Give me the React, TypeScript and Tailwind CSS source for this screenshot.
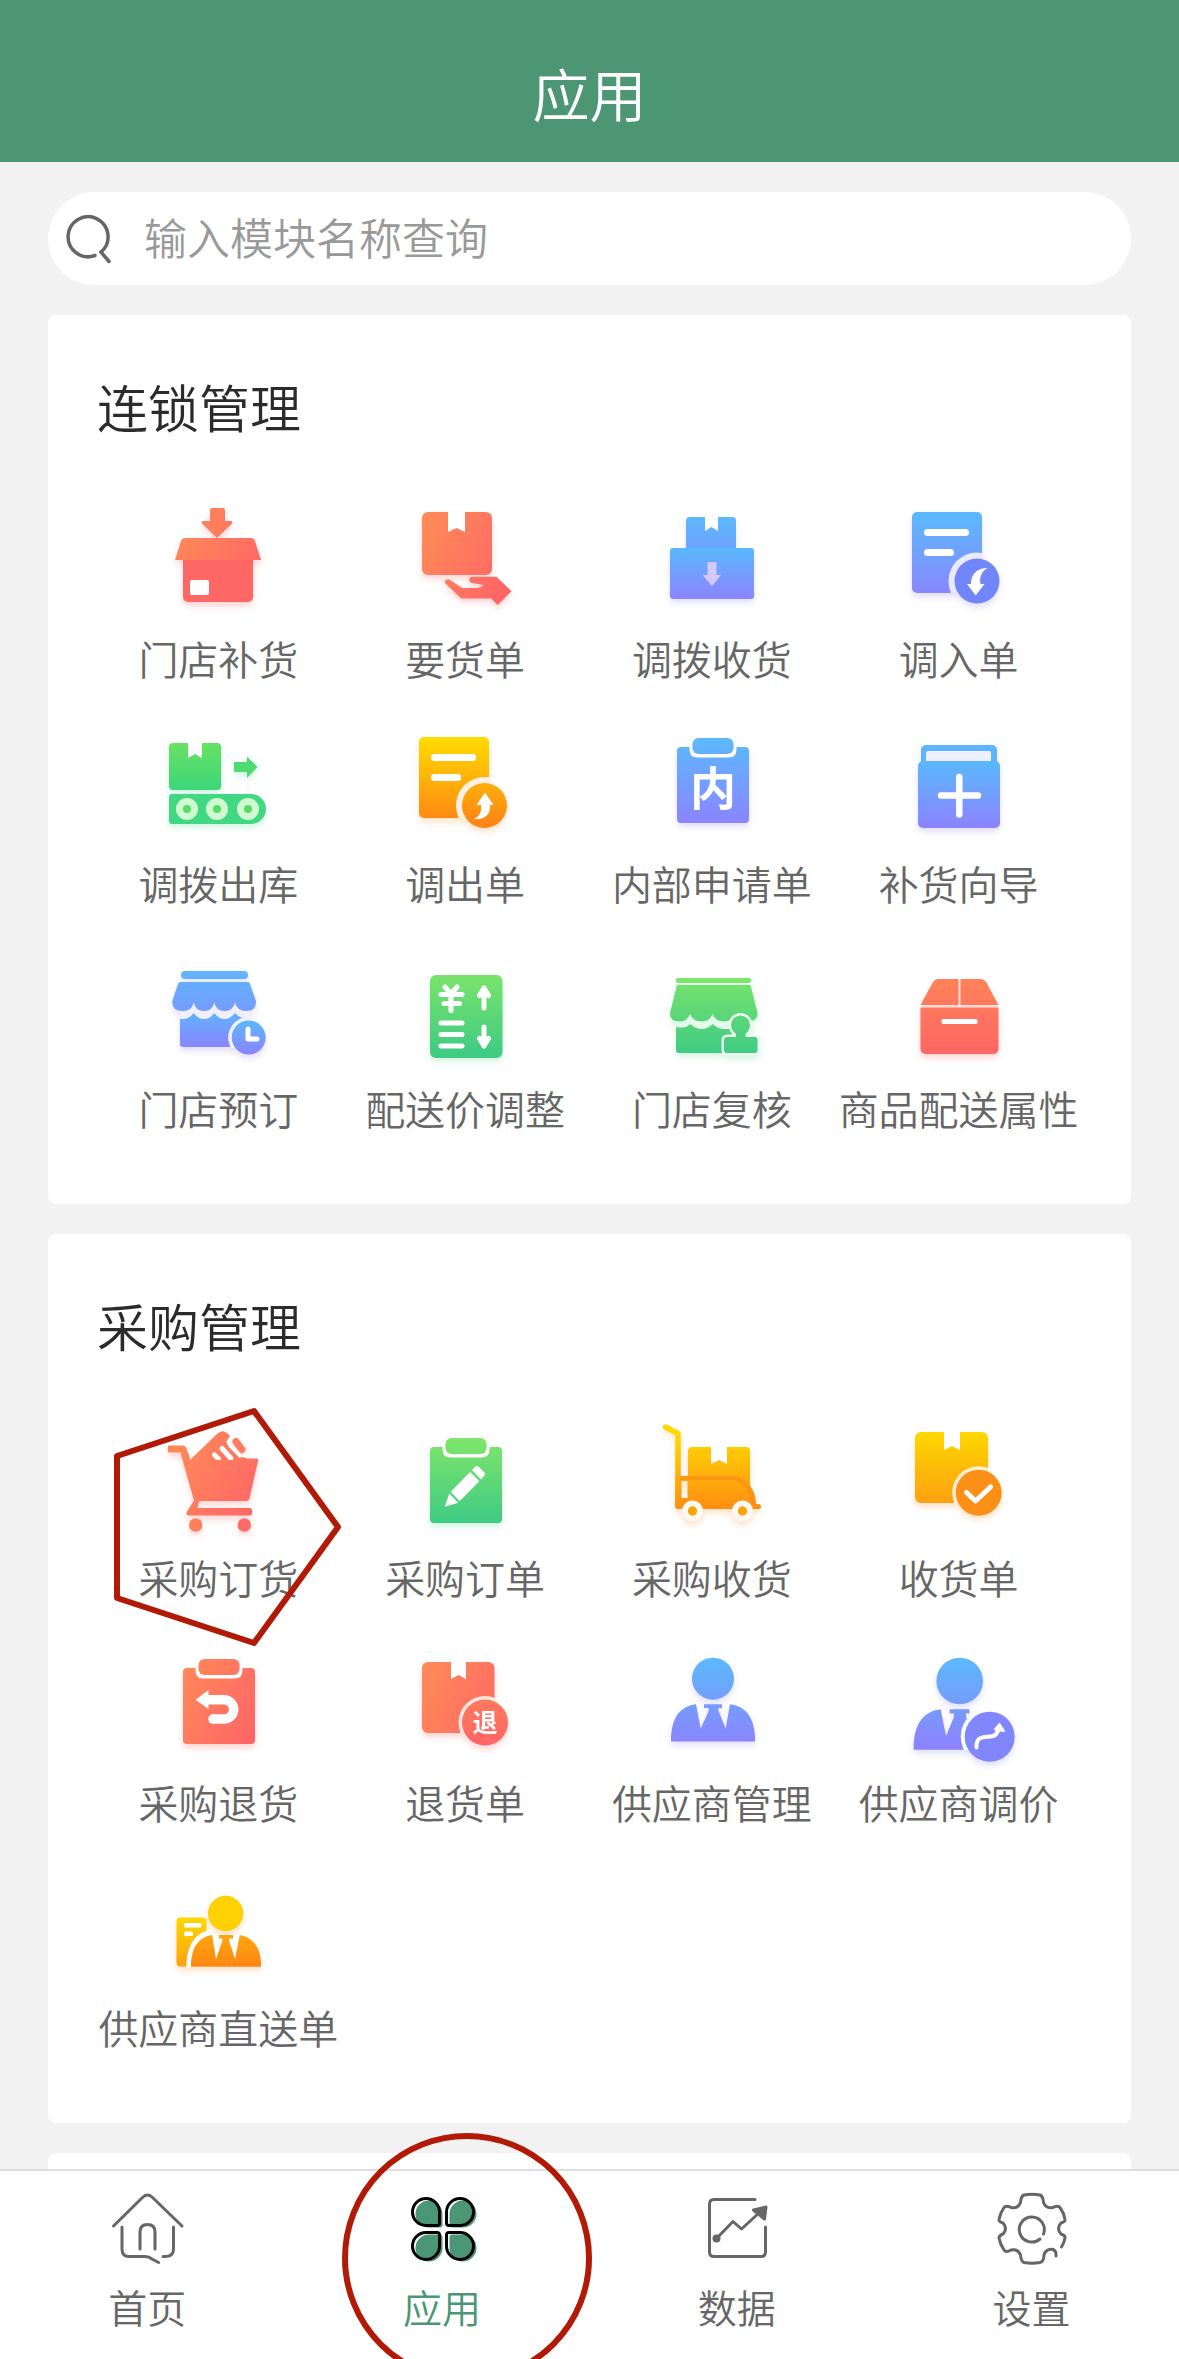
import type { ReactNode } from "react";

type Tone = "red" | "blue" | "green" | "amber";

type AppItem = {
  label: string;
  tone: Tone;
  icon: ReactNode;
  marked?: boolean;
};

const GLOW: Record<Tone, string> = {
  red: "drop-shadow-[0_4px_3px_rgba(255,104,104,0.28)]",
  blue: "drop-shadow-[0_4px_3px_rgba(140,132,253,0.25)]",
  green: "drop-shadow-[0_4px_3px_rgba(60,211,127,0.22)]",
  amber: "drop-shadow-[0_4px_3px_rgba(255,140,40,0.25)]",
};

/** Shared fills: plain ids span the whole icon, "-box" ids span one shape */
function Gradients() {
  return (
    <svg className="absolute size-0" aria-hidden="true">
      <defs>
        <linearGradient id="red" gradientUnits="userSpaceOnUse" x1="15" y1="30" x2="105" y2="75">
          <stop offset="0" stopColor="#ff8a58" />
          <stop offset="1" stopColor="#ff6666" />
        </linearGradient>
        <linearGradient id="red-down" gradientUnits="userSpaceOnUse" x1="0" y1="28" x2="0" y2="104">
          <stop offset="0" stopColor="#ff8358" />
          <stop offset="1" stopColor="#ff6566" />
        </linearGradient>
        <linearGradient id="blue" gradientUnits="userSpaceOnUse" x1="0" y1="15" x2="0" y2="98">
          <stop offset="0" stopColor="#5cb8fd" />
          <stop offset="1" stopColor="#8b84fe" />
        </linearGradient>
        <linearGradient id="blue-box" x1="0" y1="0" x2="0" y2="1">
          <stop offset="0" stopColor="#59b9fd" />
          <stop offset="1" stopColor="#8b84fe" />
        </linearGradient>
        <linearGradient id="green" gradientUnits="userSpaceOnUse" x1="0" y1="20" x2="0" y2="104">
          <stop offset="0" stopColor="#7de56a" />
          <stop offset="1" stopColor="#3ecb84" />
        </linearGradient>
        <linearGradient id="green-box" x1="0" y1="0" x2="0" y2="1">
          <stop offset="0" stopColor="#68e263" />
          <stop offset="1" stopColor="#3cd67a" />
        </linearGradient>
        <linearGradient id="amber" gradientUnits="userSpaceOnUse" x1="0" y1="12" x2="0" y2="98">
          <stop offset="0" stopColor="#fedb00" />
          <stop offset="1" stopColor="#ff8514" />
        </linearGradient>
        <linearGradient id="amber-box" x1="0" y1="0" x2="0" y2="1">
          <stop offset="0" stopColor="#fcd800" />
          <stop offset="1" stopColor="#ffa010" />
        </linearGradient>
      </defs>
    </svg>
  );
}

function Ribbon({ x, y, w, h }: { x: number; y: number; w: number; h: number }) {
  return <path fill="#fff" d={`M${x} ${y}h${w}v${h}l${-w / 2}-4l${-w / 2} 4z`} />;
}

type BadgeProps = {
  id: string;
  cx: number;
  cy: number;
  r: number;
  ring: number;
  fill: string;
  ringFill: string;
  /** right and bottom edge of the shape that the ring bites into */
  right: number;
  bottom: number;
};

function Badge({ id, cx, cy, r, ring, fill, ringFill, right, bottom }: BadgeProps) {
  return (
    <>
      <clipPath id={id}>
        <rect width={right} height={bottom} />
      </clipPath>
      <circle cx={cx} cy={cy} r={ring} fill={ringFill} clipPath={`url(#${id})`} />
      <circle cx={cx} cy={cy} r={r} fill={fill} />
    </>
  );
}

function Clipboard({ fill, top, children }: { fill: string; top: number; children: ReactNode }) {
  return (
    <>
      <rect x="25" y={top + 9} width="72" height="76" rx="4" fill={fill} />
      <path fill="#fff" d={`M37.500 ${top + 8.5}h47v3q0 8-8 8h-31q-8 0-8-8z`} />
      <rect x="40.500" y={top} width="41" height="16" rx="6" fill={fill} />
      {children}
    </>
  );
}

const storeReplenish = (
  <>
    <path fill="url(#red)" d="M54 7h11a2 2 0 0 1 2 2v11h6a1.5 1.5 0 0 1 1 2.500L59 37L44 22.500A1.500 1.500 0 0 1 45 20h7V9a2 2 0 0 1 2-2z" />
    <path fill="#fe6763" d="M25 58h70v38a5 5 0 0 1-5 5H30a5 5 0 0 1-5-5z" />
    <path fill="url(#red)" d="M27 37h66q3 0 4 3l6 19H17l6-19q1-3 4-3z" />
    <rect x="32" y="79" width="19" height="15" rx="2" fill="#fff" />
  </>
);

const requestGoods = (
  <>
    <rect x="17" y="11" width="70" height="63" rx="6" fill="url(#red)" />
    <Ribbon x={43} y={11} w={17} h={20} />
    <path
      fill="url(#red)"
      d="M40.500 82.500Q39 79.500 42 78.500Q43.500 78 45 79L57.500 87H71Q76 87 78.500 84L67 82Q64 81 64.300 78.500Q64.500 76 67.500 75.700H91.500L106.500 90.300L92.700 104L86 97.500H58Q56 97.500 55 96.500z"
    />
  </>
);

const transferReceive = (
  <>
    <path fill="url(#blue)" d="M38 16h42a4 4 0 0 1 4 4v30H34V20a4 4 0 0 1 4-4z" />
    <rect x="18" y="47" width="84" height="51" rx="3" fill="url(#blue-box)" />
    <Ribbon x={53} y={15} w={13} h={15} />
    <path fill="#d6c8fa" d="M55.500 61h9v13h4.500L60 85L50.500 74h5z" />
  </>
);

const transferIn = (
  <>
    <rect x="13" y="11" width="70" height="81" rx="5" fill="url(#blue)" />
    <rect x="25" y="28" width="45" height="7" rx="3.500" fill="#fff" />
    <rect x="25" y="48" width="30" height="7" rx="3.500" fill="#fff" />
    <Badge id="cut-in" cx={78} cy={80} r={22.5} ring={28.5} fill="#7186fb" ringFill="#e9e9ff" right={83} bottom={92} />
    <path fill="#fff" d="M88.500 67C77 67 72 74 72 83H68L76.700 94.500L85.500 83H81.500C80 76 83 70 88.500 67z" />
  </>
);

const transferOut = (
  <>
    <rect x="11" y="17" width="52" height="47" rx="4" fill="url(#green-box)" />
    <Ribbon x={30} y={17} w={14} h={15} />
    <path fill="#4cdc70" d="M76 36h13v-5.500L99.500 41L89 52v-6H76z" />
    <path fill="#42d883" d="M14 68h79a15 15 0 0 1 0 30H14a3 3 0 0 1-3-3V71a3 3 0 0 1 3-3z" />
    {[29, 59, 90].map((cx) => (
      <g key={cx}>
        <circle cx={cx} cy="83" r="11" fill="#d0fbd2" />
        <circle cx={cx} cy="83" r="4" fill="#56dc66" />
      </g>
    ))}
  </>
);

const transferOutBill = (
  <>
    <rect x="14" y="11" width="70" height="81" rx="5" fill="url(#amber)" />
    <rect x="26" y="28" width="45" height="7" rx="3" fill="#fff" />
    <rect x="26" y="48" width="30" height="7" rx="3" fill="#fff" />
    <Badge id="cut-out" cx={79.5} cy={79.5} r={22.5} ring={28.5} fill="url(#amber)" ringFill="#fff0e2" right={84} bottom={92} />
    <path fill="#fff" d="M80 66.500L88.500 79H85C86 89 79 94 69 93C75 90 77 85 76 79H71.500z" />
  </>
);

const internalRequest = (
  <Clipboard fill="url(#blue)" top={12}>
    <text
      x="61"
      y="79"
      textAnchor="middle"
      className="fill-white font-['Noto_Sans_CJK_SC',sans-serif] text-[46px] font-bold"
    >
      内
    </text>
  </Clipboard>
);

const replenishGuide = (
  <>
    <rect x="22" y="19" width="76" height="40" rx="5" fill="#5fb5fc" />
    <rect x="27" y="25" width="65" height="14" rx="2" fill="#eef0ff" />
    <rect x="19" y="35" width="82" height="67" rx="5" fill="url(#blue-box)" />
    <path stroke="#fff" strokeWidth="6.500" strokeLinecap="round" d="M60.300 51v37.500M42 69.500h37" />
  </>
);

const storePreorder = (
  <>
    <rect x="23" y="20" width="67" height="8" rx="4" fill="#63b2fd" />
    <path fill="url(#blue-box)" d="M22 58H92V96H25a3 3 0 0 1-3-3z" />
    <path
      fill="#f1efff"
      d="M22 52V68H25Q31 68 35.700 62Q40 68 46 68Q52 68 56.300 62Q61 68 66.500 68Q72 68 77 62Q82 68 92 68V50H22z"
    />
    <path
      fill="url(#blue)"
      d="M22 31H90Q91.500 31 92 33L98 50Q98.500 60 88 60Q79 60 77 51.500Q75 60 66.500 60Q58 60 56.300 51.500Q54.500 60 46 60Q37.500 60 35.700 51.500Q34 60 25 60Q13.500 60 14.300 50L20 33Q20.500 31 22 31z"
    />
    <Badge id="cut-preorder" cx={90.7} cy={86.5} r={17} ring={20.5} fill="url(#blue-box)" ringFill="#f1f3ff" right={93} bottom={97} />
    <path fill="none" stroke="#fff" strokeWidth="5" strokeLinecap="round" strokeLinejoin="round" d="M90 78v10h9" />
  </>
);

const priceAdjust = (
  <>
    <rect x="25" y="24" width="72.500" height="83" rx="6" fill="url(#green)" />
    <path
      fill="none"
      stroke="#fff"
      strokeWidth="5"
      strokeLinecap="round"
      strokeLinejoin="round"
      d="M40 36l6 7l6-7M36 43.500h21M39 52.500h15.500M46 44v15.500M36 72h21M36 83.500h21M36 95h21M79 38v19M74.500 44.500L79 37l4.500 7.500M79 76v19M74.500 87.500L79 95l4.500-7.500"
    />
  </>
);

const storeReview = (
  <>
    <rect x="24" y="27" width="75" height="5" rx="2" fill="#7de56a" />
    <path fill="url(#green)" d="M24 66H80V102H27a3 3 0 0 1-3-3z" />
    <path fill="#e3fbea" d="M24 60V76Q34 78 38 73Q44 78 49.500 78Q56 78 60.600 73Q66 78 72 78H80V60z" />
    <path
      fill="url(#green)"
      d="M25 34H98.500L105.500 62Q106 70.500 94 70.500Q85 70.500 83 63Q80 70.500 72 70.500Q63 70.500 60.600 63Q58 70.500 49.500 70.500Q41 70.500 38 63Q35 70.500 28 70.500Q17.500 70.500 18 62z"
    />
    <path
      fill="url(#green)"
      stroke="#eafcf0"
      strokeWidth="5"
      paintOrder="stroke"
      d="M84 83Q79 79 79 74a9.500 9.500 0 0 1 19 0Q98 79 93.500 83v3h9a3 3 0 0 1 3 3v10a3 3 0 0 1-3 3H75a3 3 0 0 1-3-3V89a3 3 0 0 1 3-3h9z"
    />
  </>
);

const deliveryProps = (
  <>
    <path fill="url(#red-down)" d="M59.500 28V54H21.500L34 31Q36 28 39 28zM61.500 28V54H99.500L87 31Q85 28 82 28z" />
    <path fill="url(#red-down)" d="M21.500 56.500h78V98a5 5 0 0 1-5 5h-68a5 5 0 0 1-5-5z" />
    <rect x="42.500" y="68" width="36" height="5" rx="2" fill="#fff" />
  </>
);

const purchaseCart = (
  <>
    <path fill="url(#red)" d="M32 40L59 14Q64 9 69 13L72 16L68 22L90 40z" />
    <path fill="none" stroke="#ff7a60" strokeWidth="7" strokeLinecap="round" d="M78 21.500l6 8" />
    <g fill="none" stroke="#fff" strokeLinecap="round">
      <path strokeWidth="5" d="M64 28.500l9 10" />
      <path strokeWidth="5" d="M56.500 35l4 4" />
      <path strokeWidth="3.500" d="M71.500 20.500Q70 23 72 25.500L82 36Q84 38 88 35.500" />
    </g>
    <path
      fill="url(#red)"
      d="M10 25.500H25Q27.500 25.500 28.300 28L32.500 40H76L84 37L89 38.500H98Q101 38.500 100 41L91.500 78Q90.700 81 88 81H43Q41 81 40.500 83L39.500 88H92Q94 88 94 91V93Q94 95.500 92 95.500H31Q27.500 95.500 28.800 92L36 80.500L22.500 32.500H10z"
    />
    <circle cx="37.700" cy="105" r="6.700" fill="#ff8058" />
    <circle cx="86.300" cy="105" r="6.700" fill="#ff6b68" />
  </>
);

const purchaseOrder = (
  <Clipboard fill="url(#green)" top={18}>
    <path
      fill="#fff"
      d="M45.700 71.700L65 52l9.300 9.300l-19.600 20zM67 50l3-3q2-2 4 0l5 5q2 2 0 4l-3 3.500zM44.300 73.500l9 9.200l-13.600 4z"
    />
  </Clipboard>
);

const purchaseReceive = (
  <>
    <path fill="url(#amber)" d="M40 27h54a4 4 0 0 1 4 4v40H36V31a4 4 0 0 1 4-4z" />
    <Ribbon x={59} y={27} w={16} h={17} />
    <path fill="none" stroke="url(#amber)" strokeWidth="5.500" strokeLinecap="round" strokeLinejoin="round" d="M13.500 7L26 13.500V86" />
    <path
      fill="url(#amber)"
      fillRule="evenodd"
      d="M26 56H84Q103 62 104 84H107Q109 84 109 86.500Q109 89 107 89H26Q23.300 89 23.300 86V58zM29.500 61V78H35.500V61z"
    />
    <path fill="none" stroke="#fb8b18" strokeWidth="4" strokeOpacity=".7" d="M28 58H83Q99 63 102 84" />
    {[40.5, 90.5].map((cx) => (
      <g key={cx}>
        <circle cx={cx} cy="91" r="10.500" fill="#fffaf6" />
        <circle cx={cx} cy="91" r="4.700" fill="#fba50c" />
      </g>
    ))}
  </>
);

const receiveBill = (
  <>
    <rect x="16" y="12" width="73" height="71" rx="6" fill="url(#amber-box)" />
    <Ribbon x={45} y={12} w={16} h={18} />
    <Badge id="cut-receive" cx={79.7} cy={72.7} r={23} ring={26.5} fill="#fc8f16" ringFill="#ffeed2" right={89} bottom={83} />
    <path fill="none" stroke="#fff" strokeWidth="5" strokeLinecap="round" strokeLinejoin="round" d="M67.500 72.500l9 8.500L91.500 67" />
  </>
);

const purchaseReturn = (
  <Clipboard fill="url(#red)" top={14}>
    <path fill="#fff" d="M37.500 54.700L50.500 45v19z" />
    <path fill="none" stroke="#fff" strokeWidth="9.500" d="M49 54.700h17a9.700 9.700 0 0 1 0 19.400H54" />
    <circle cx="55" cy="74.100" r="4.750" fill="#fff" />
  </Clipboard>
);

const returnBill = (
  <>
    <rect x="17" y="17" width="72.500" height="71" rx="6" fill="url(#red)" />
    <Ribbon x={46} y={17} w={15} h={17} />
    <Badge id="cut-return" cx={80} cy={77.5} r={23} ring={26.5} fill="url(#red-down)" ringFill="#ffe6df" right={90} bottom={88} />
    <text
      x="80"
      y="87"
      textAnchor="middle"
      className="fill-white font-['Noto_Sans_CJK_SC',sans-serif] text-[25px] font-bold"
    >
      退
    </text>
  </>
);

const supplier = (
  <>
    <circle cx="61" cy="33.700" r="21" fill="url(#blue)" />
    <path
      fill="url(#blue)"
      d="M19 96.500V91Q21 62 44 59.300L48.700 83.500L56.700 66V63H52V59.300H70V63H66.500V66L73.700 83.500L78 59.300Q101 62 103 91V96.500z"
    />
  </>
);

const supplierPrice = (
  <>
    <circle cx="60.700" cy="36" r="23.300" fill="url(#blue)" />
    <path
      fill="url(#blue)"
      d="M14.700 104.700V98Q17 67 41.700 64.300L47 91L55 72V68.500H50.700V64.300H70.500V68.500H67V72L80 104.700z"
    />
    <Badge id="cut-price" cx={90.7} cy={91.7} r={25} ring={29} fill="#8286fd" ringFill="#f4fcfd" right={80} bottom={105} />
    <path fill="none" stroke="#fff" strokeWidth="4" strokeLinecap="round" d="M77.500 102.500C77 93 82 92 89 91.700C96 91.500 98 90 100 83" />
    <path fill="#fff" d="M100.500 79l4.500 7l-9-1.500z" stroke="#fff" strokeWidth="2" strokeLinejoin="round" />
  </>
);

const supplierDirect = (
  <>
    <rect x="18.500" y="47.500" width="30" height="49" rx="4" fill="url(#amber-box)" />
    <rect x="26" y="53" width="17.500" height="4.500" rx="1.500" fill="#fff" />
    <rect x="26" y="61.500" width="9" height="4.500" rx="1.500" fill="#fff" />
    <path fill="#fff" d="M28.500 97V91Q31 66 50 60H54V97z" />
    <path fill="url(#amber)" d="M33 96.700V92Q35 68 54 65H81Q101 68 103 92V96.700z" />
    <path fill="#fff" d="M54 64L58 89L64.500 70.500V68.500H61V64zM82 64L77 89L71 70.500V68.500H75V64z" />
    <circle cx="67.600" cy="43.500" r="17.700" fill="#fdd102" />
  </>
);

const SECTIONS: { title: string; items: AppItem[] }[] = [
  {
    title: "连锁管理",
    items: [
      { label: "门店补货", tone: "red", icon: storeReplenish },
      { label: "要货单", tone: "red", icon: requestGoods },
      { label: "调拨收货", tone: "blue", icon: transferReceive },
      { label: "调入单", tone: "blue", icon: transferIn },
      { label: "调拨出库", tone: "green", icon: transferOut },
      { label: "调出单", tone: "amber", icon: transferOutBill },
      { label: "内部申请单", tone: "blue", icon: internalRequest },
      { label: "补货向导", tone: "blue", icon: replenishGuide },
      { label: "门店预订", tone: "blue", icon: storePreorder },
      { label: "配送价调整", tone: "green", icon: priceAdjust },
      { label: "门店复核", tone: "green", icon: storeReview },
      { label: "商品配送属性", tone: "red", icon: deliveryProps },
    ],
  },
  {
    title: "采购管理",
    items: [
      { label: "采购订货", tone: "red", icon: purchaseCart, marked: true },
      { label: "采购订单", tone: "green", icon: purchaseOrder },
      { label: "采购收货", tone: "amber", icon: purchaseReceive },
      { label: "收货单", tone: "amber", icon: receiveBill },
      { label: "采购退货", tone: "red", icon: purchaseReturn },
      { label: "退货单", tone: "red", icon: returnBill },
      { label: "供应商管理", tone: "blue", icon: supplier },
      { label: "供应商调价", tone: "blue", icon: supplierPrice },
      { label: "供应商直送单", tone: "amber", icon: supplierDirect },
    ],
  },
];

function PentagonMark() {
  return (
    <svg
      viewBox="0 0 232 244"
      className="pointer-events-none absolute -top-4 left-1/2 z-10 h-[244px] w-[232px] -translate-x-[107px]"
      aria-hidden="true"
    >
      <path
        fill="none"
        stroke="#b11a07"
        strokeWidth="6"
        strokeLinejoin="round"
        d="M6 52L143 7L227 123L143 239L6 194z"
      />
    </svg>
  );
}

function AppButton({ item }: { item: AppItem }) {
  return (
    <button type="button" className="relative flex flex-col items-center">
      <svg viewBox="0 0 120 120" className={`size-[120px] overflow-visible ${GLOW[item.tone]}`} aria-hidden="true">
        {item.icon}
      </svg>
      <span className="mt-2 whitespace-nowrap text-[40px] leading-[58px] text-[#666]">{item.label}</span>
      {item.marked && <PentagonMark />}
    </button>
  );
}

const homeIcon = (
  <>
    <path d="M2.500 34L32 5Q36.500 1 41 5L71 34" />
    <path d="M11 35V57Q11 64.500 18 64.500H34Q38 64.500 41 67L47.500 70.500M62.500 35V57Q62.500 64.500 54 64.500H52" />
    <path d="M29 57V40Q29 32.500 36.500 32.500Q44 32.500 44 40V57" />
  </>
);

const PETALS =
  "M20 6.500a13 13 0 0 0 0 27H31Q33.500 33.500 33.500 31V20A13.500 13.500 0 0 0 20 6.500zM54 6.500a13 13 0 0 1 0 27H43Q40.500 33.500 40.500 31V20A13.500 13.500 0 0 1 54 6.500zM20 67.500a13 13 0 0 1 0-27H31Q33.500 40.500 33.500 43V54A13.500 13.500 0 0 1 20 67.500zM54 67.500a13 13 0 0 0 0-27H43Q40.500 40.500 40.500 43V54A13.500 13.500 0 0 0 54 67.500z";

const appsIcon = (
  <>
    <path d={PETALS} fill="#4b9674" stroke="none" transform="translate(3 2)" />
    <path d={PETALS} stroke="#000" strokeWidth="3" />
  </>
);

const dataIcon = (
  <>
    <path d="M54 7.500H13Q8.500 7.500 8.500 12V60Q8.500 64.500 13 64.500H60Q64.500 64.500 64.500 60V35" />
    <path d="M16 46L32 29.500L40.500 37L59 20" />
    <path fill="currentColor" d="M65 15L52.500 18L63.500 27z" />
    <circle cx="15.500" cy="46.500" r="2.500" fill="currentColor" />
  </>
);

const settingsIcon = (
  <>
    <path d="M60 64Q60.500 59 57 57.500Q50 56.500 48 63Q48 69.500 44 70.500Q36 72 28 70.500Q25 69.500 24.500 63Q22 56.500 15 58Q10 61 8 58Q4 52 3 46Q3 43.500 7 42Q12 36.500 7 31Q2.500 29.500 3 27.500Q4.500 20.500 8 15.500Q10 13 15 15.500Q22 17 24.500 10.500Q25 4 28 3Q36 1.500 44 3Q47 4 47.500 10.500Q50 17 57 15.500Q62 13 64 15.500Q68 21 69 27.500Q69.500 29.500 65 31Q60 36.500 65 42Q69.500 43.500 69 46Q68 51 65.500 55" />
    <path d="M44 47A12.500 12.500 0 1 1 47.500 42" />
  </>
);

const TABS = [
  { label: "首页", icon: homeIcon },
  { label: "应用", icon: appsIcon, active: true },
  { label: "数据", icon: dataIcon },
  { label: "设置", icon: settingsIcon },
];

export default function App() {
  return (
    <div className="flex h-screen flex-col overflow-hidden bg-[#f2f2f2] font-['Noto_Sans_CJK_SC',sans-serif] font-[350]">
      <Gradients />
      <header className="shrink-0 bg-[#4c9673] pb-[30px] pt-[52px] text-center">
        <h1 className="text-[57px] leading-[80px] text-white">应用</h1>
      </header>

      <main className="min-h-0 flex-1 space-y-[30px] overflow-y-auto px-12 pt-[30px] [scrollbar-width:none]">
        <label className="flex h-[93px] items-center rounded-full bg-white pl-4">
          <svg viewBox="0 0 50 50" className="size-[50px] shrink-0 text-[#666]" aria-hidden="true">
            <g fill="none" stroke="currentColor" strokeWidth="3.500" strokeLinecap="round">
              <path d="M31 41.500A20 20 0 1 1 37 38" />
              <path d="M37 38L45 47.500" />
            </g>
          </svg>
          <input
            type="search"
            aria-label="输入模块名称查询"
            placeholder="输入模块名称查询"
            className="ml-[30px] min-w-0 flex-1 bg-transparent pb-1.5 text-[43px] leading-[60px] text-[#333] outline-none placeholder:text-[#999]"
          />
        </label>

        {SECTIONS.map((section) => (
          <section key={section.title} className="rounded-lg bg-white pb-[67px] pl-[47px] pr-[49px] pt-[54px]">
            <h2 className="pl-0.5 text-[51px] leading-[74px] text-[#2b2b2b]">{section.title}</h2>
            <div className="mt-[58px] grid grid-cols-4 gap-y-[39px]">
              {section.items.map((item) => (
                <AppButton key={item.label} item={item} />
              ))}
            </div>
          </section>
        ))}

        <section className="h-64 rounded-lg bg-white" />
      </main>

      <nav className="relative z-10 grid shrink-0 grid-cols-4 border-t-2 border-[#dcdfdf] bg-white">
        {TABS.map((tab) => (
          <button
            key={tab.label}
            type="button"
            aria-current={tab.active ? "page" : undefined}
            className={`relative flex flex-col items-center pb-6 pt-[21px] ${tab.active ? "text-[#4b9674]" : "text-[#666]"}`}
          >
            <svg
              viewBox="0 0 72 72"
              className="size-[72px] overflow-visible"
              fill="none"
              stroke="currentColor"
              strokeWidth="3"
              strokeLinecap="round"
              strokeLinejoin="round"
              aria-hidden="true"
            >
              {tab.icon}
            </svg>
            <span className="mt-[13px] text-[39px] leading-[58px]">{tab.label}</span>
            {tab.active && (
              <span className="pointer-events-none absolute -top-[38px] left-[47px] size-[250px] rounded-full border-[6px] border-[#b11a07]" />
            )}
          </button>
        ))}
      </nav>
    </div>
  );
}
